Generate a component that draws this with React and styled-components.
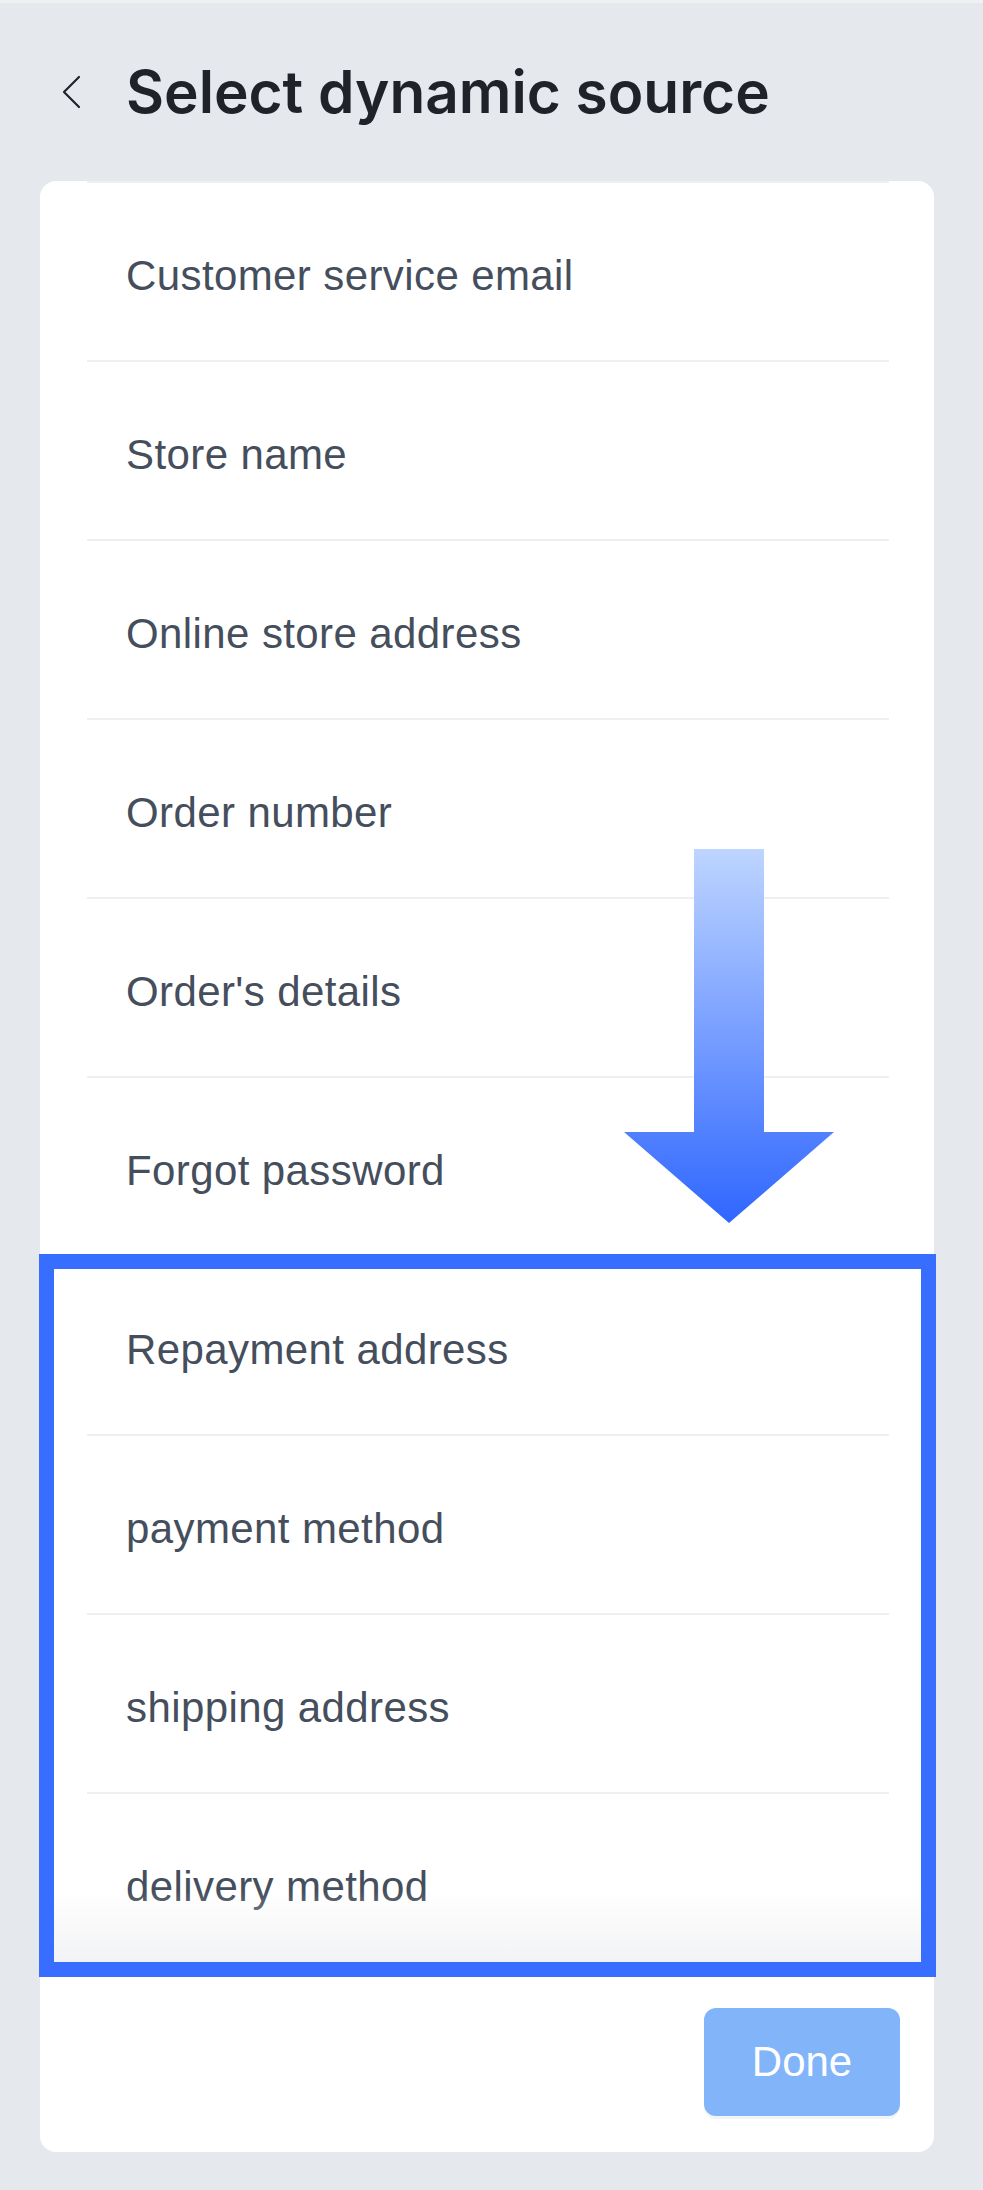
import React from "react";
import styled, { createGlobalStyle } from "styled-components";

const GlobalStyle = createGlobalStyle`
  html, body {
    margin: 0;
    padding: 0;
    background: #e5e8ed;
  }
  * {
    box-sizing: border-box;
  }
`;

const sources = [
  "Customer service email",
  "Store name",
  "Online store address",
  "Order number",
  "Order's details",
  "Forgot password",
  "Repayment address",
  "payment method",
  "shipping address",
  "delivery method",
];

function App() {
  return (
    <Page>
      <GlobalStyle />
      <Header>
        <BackButton aria-label="Back">
          <svg width="22" height="34" viewBox="0 0 22 34" fill="none">
            <path
              d="M19 2 L4 17 L19 32"
              stroke="#1f2329"
              strokeWidth="2.2"
              strokeLinecap="round"
              strokeLinejoin="round"
            />
          </svg>
        </BackButton>
        <Title>Select dynamic source</Title>
      </Header>

      <Card>
        <List>
          {sources.map((name) => (
            <Row key={name}>
              <RowLabel>{name}</RowLabel>
            </Row>
          ))}
          <BottomFade />
        </List>

        <Footer>
          <DoneButton disabled>Done</DoneButton>
        </Footer>

        {/* annotation overlays */}
        <Highlight />
        <DownArrow viewBox="0 0 210 374">
          <defs>
            <linearGradient id="arrowFill" x1="0" y1="0" x2="0" y2="1">
              <stop offset="0%" stopColor="#bed5ff" />
              <stop offset="100%" stopColor="#2f66ff" />
            </linearGradient>
          </defs>
          <polygon
            points="70,0 140,0 140,283 210,283 105,374 0,283 70,283"
            fill="url(#arrowFill)"
          />
        </DownArrow>
      </Card>
    </Page>
  );
}

export default App;

const Page = styled.div`
  min-height: 2190px;
  border-top: 3px solid #eef0f2;
  padding: 0 49px 38px 40px;
  font-family: "Liberation Sans", Arial, sans-serif;
`;

const Header = styled.div`
  display: flex;
  align-items: flex-start;
  gap: 44px;
  padding: 53px 0 0 20px;
  height: 178px;
`;

const BackButton = styled.button`
  display: flex;
  align-items: center;
  justify-content: center;
  width: 22px;
  height: 71px;
  padding: 0;
  border: none;
  background: none;
  cursor: pointer;
`;

const Title = styled.h1`
  margin: 0;
  font-family: Inter, "Liberation Sans", sans-serif;
  font-size: 58.5px;
  line-height: 71px;
  font-weight: 600;
  color: #1f2329;
`;

const Card = styled.div`
  position: relative;
  background: #fff;
  border-radius: 16px;
  width: 894px;
`;

const List = styled.div`
  position: relative;
  height: 1790px;
  overflow: hidden;
  border-radius: 16px 16px 0 0;
`;

const Row = styled.div`
  display: flex;
  align-items: center;
  height: 179px;
  padding-top: 8px;
  margin: 0 45px 0 47px;
  border-top: 2px solid #edf0f3;
`;

const RowLabel = styled.span`
  padding-left: 39px;
  font-size: 42px;
  letter-spacing: 0.4px;
  color: #454e5c;
`;

const BottomFade = styled.div`
  position: absolute;
  left: 0;
  right: 0;
  bottom: 0;
  height: 80px;
  pointer-events: none;
  background: linear-gradient(
    to bottom,
    rgba(240, 241, 243, 0) 0%,
    rgba(238, 239, 241, 0.85) 100%
  );
`;

const Footer = styled.div`
  display: flex;
  justify-content: flex-end;
  padding: 37px 34px 36px 0;
`;

const DoneButton = styled.button`
  width: 196px;
  height: 108px;
  border: none;
  border-radius: 12px;
  background: #82b4fa;
  color: #fff;
  font-family: "Liberation Sans", Arial, sans-serif;
  font-size: 42px;
  box-shadow: 0 3px 0 #f3f4f6;
  cursor: not-allowed;
`;

const Highlight = styled.div`
  position: absolute;
  left: -1px;
  top: 1073px;
  width: 897px;
  height: 723px;
  border: 15px solid #376eff;
  pointer-events: none;
`;

const DownArrow = styled.svg`
  position: absolute;
  left: 584px;
  top: 668px;
  width: 210px;
  height: 374px;
  pointer-events: none;
`;
